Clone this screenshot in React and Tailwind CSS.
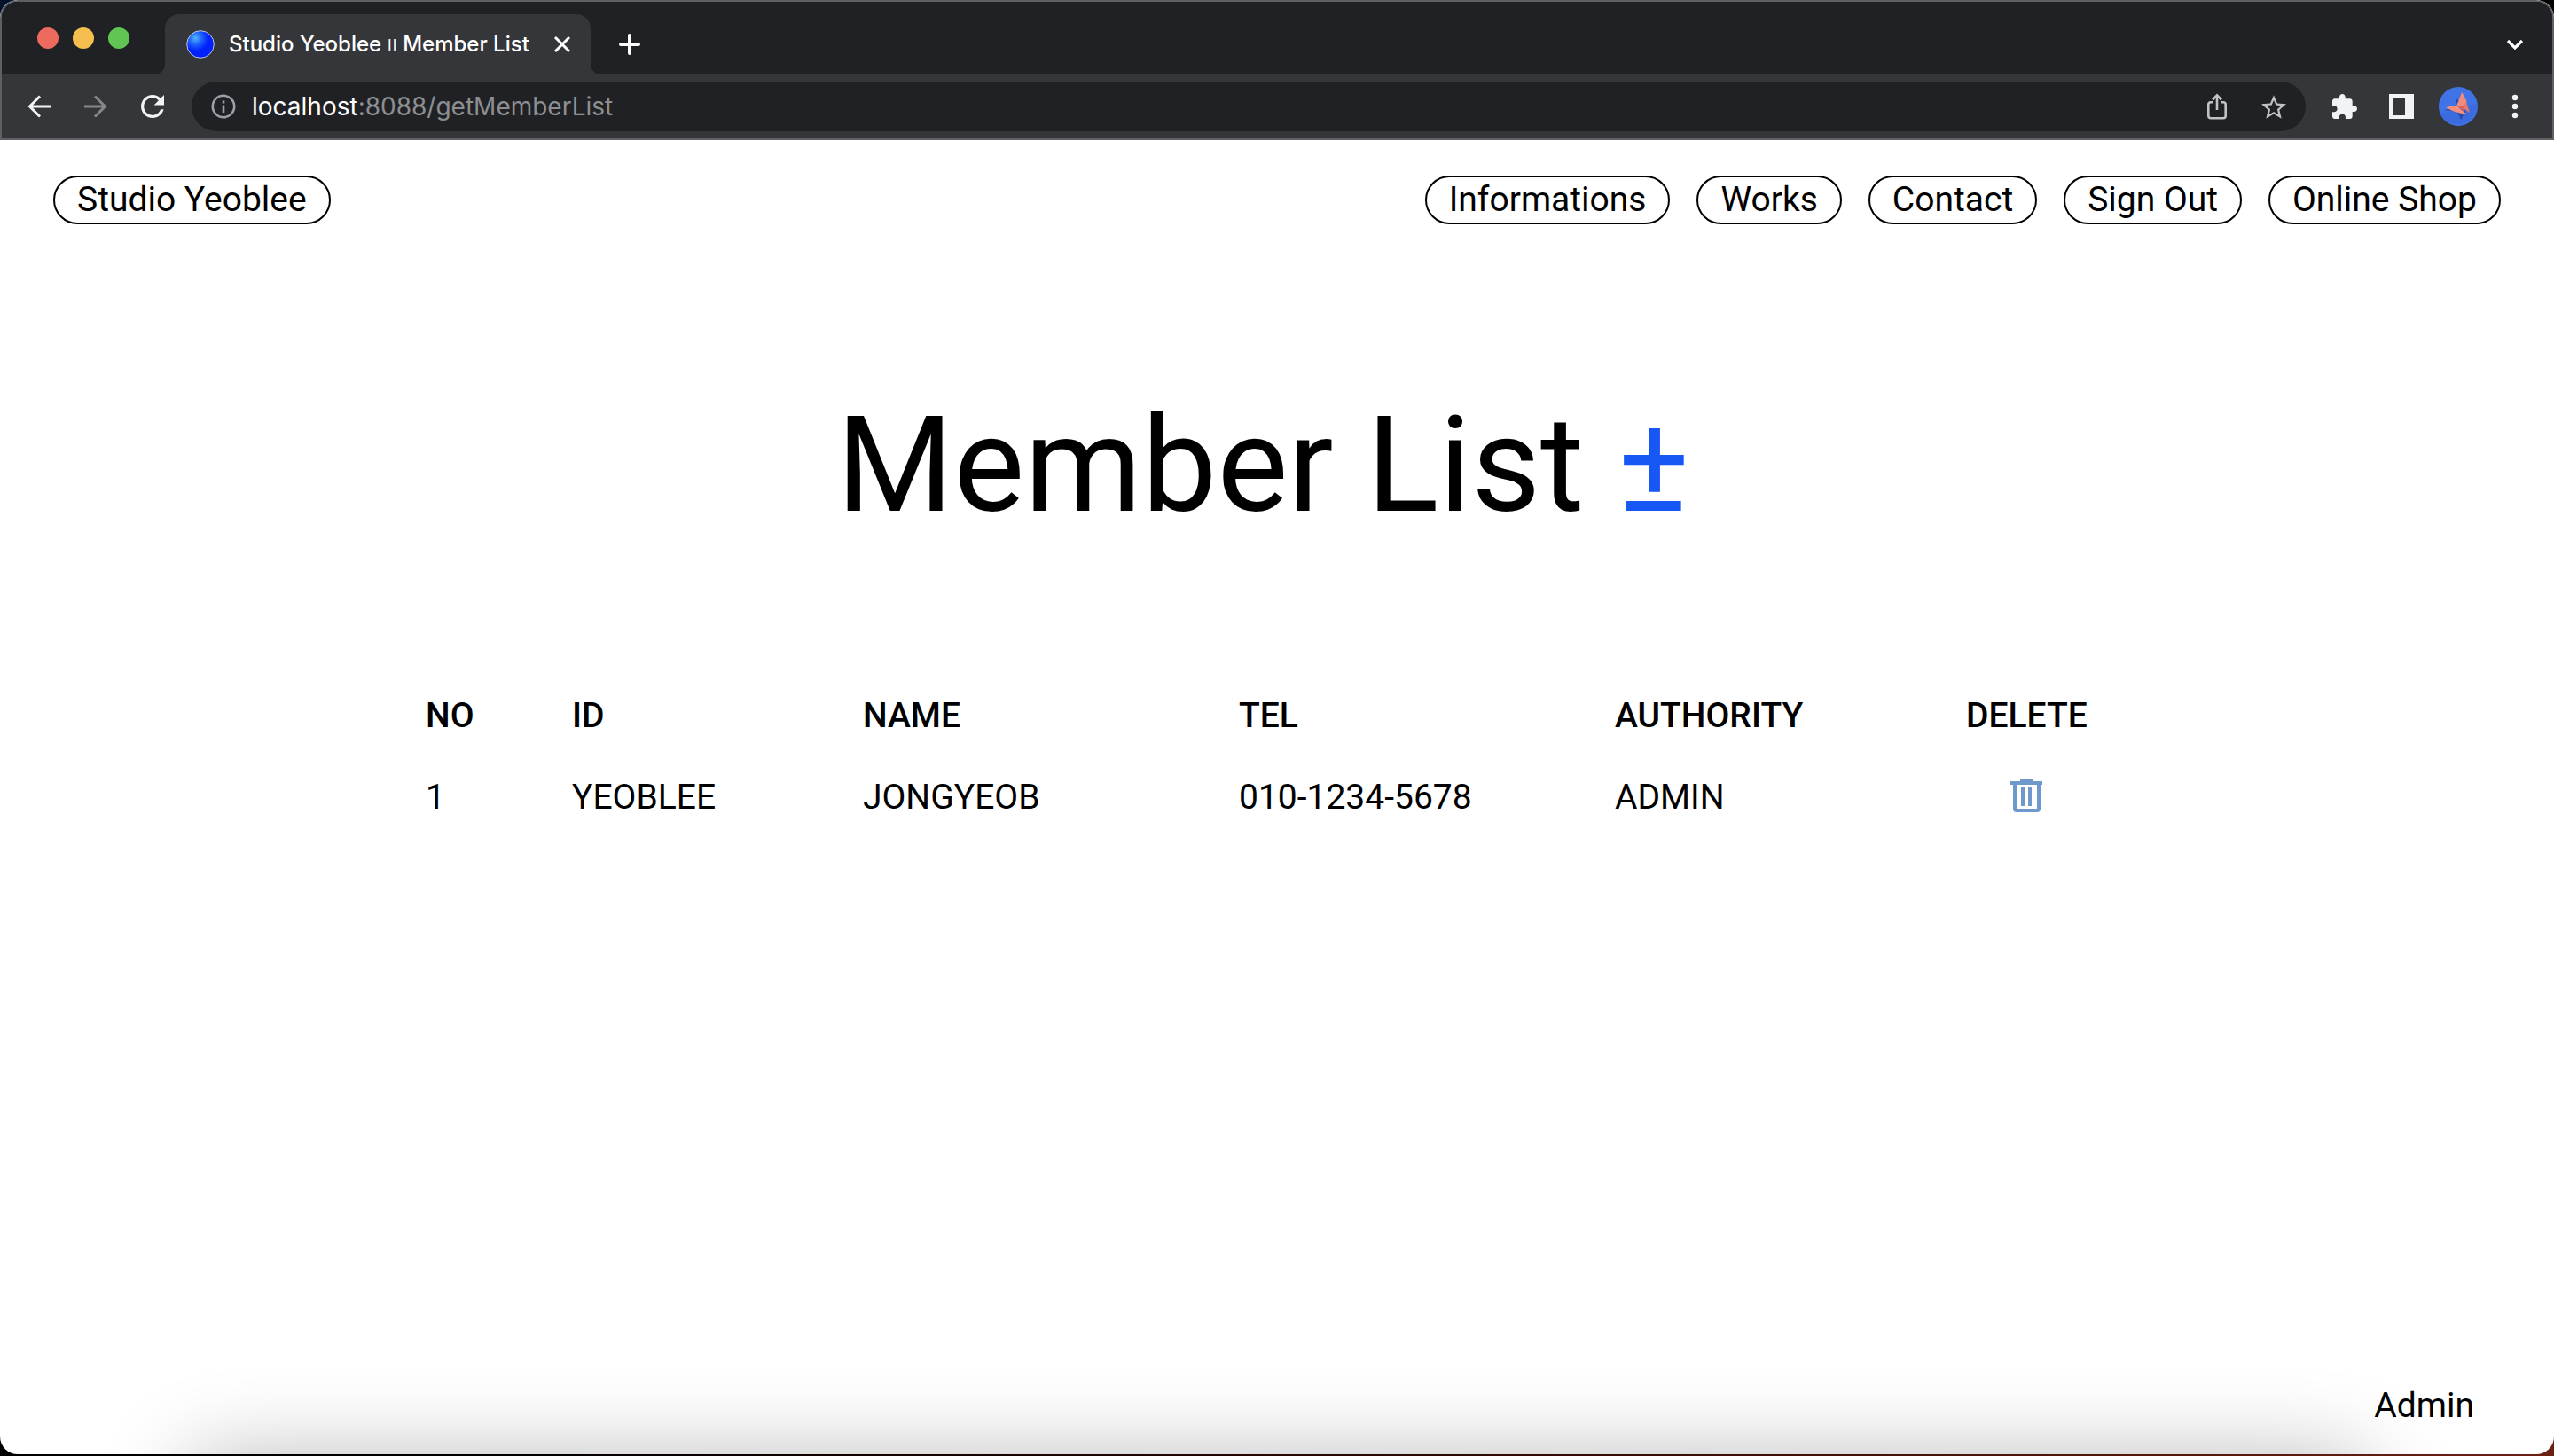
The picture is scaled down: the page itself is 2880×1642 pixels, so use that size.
const navItems = ["Informations", "Works", "Contact", "Sign Out", "Online Shop"];
const columns = [
  { label: "NO", width: "w-[165px]" },
  { label: "ID", width: "w-[328px]" },
  { label: "NAME", width: "w-[424px]" },
  { label: "TEL", width: "w-[424px]" },
  { label: "AUTHORITY", width: "w-[396px]" },
];
const members = [["1", "YEOBLEE", "JONGYEOB", "010-1234-5678", "ADMIN"]];
const pill =
  "flex h-[55px] items-center rounded-full border-2 border-black px-[25px] text-[39px] leading-none whitespace-nowrap";

function TrashIcon() {
  return (
    <svg viewBox="0 0 36 38" className="h-[38px] w-[36px]" fill="none" stroke="#7099cb">
      <path d="M0 5h36" strokeWidth="4" />
      <path d="M11 2h14" strokeWidth="3" />
      <path d="M5 5v29q0 2 2 2h23q2 0 2-2V5" strokeWidth="4" />
      <path d="M14 10v21M22 10v21" strokeWidth="4" />
    </svg>
  );
}

function Favicon() {
  return (
    <svg viewBox="0 0 32 32" className="size-8">
      <defs>
        <radialGradient id="globe" cx="0.32" cy="0.27" r="0.48">
          <stop offset="0" stopColor="#4fb4ff" />
          <stop offset="0.5" stopColor="#1d62fb" />
          <stop offset="1" stopColor="#0021fa" />
        </radialGradient>
      </defs>
      <circle cx="16" cy="16" r="15.3" fill="url(#globe)" stroke="#bfc3dc" />
    </svg>
  );
}

function ShareIcon() {
  return (
    <svg viewBox="0 0 22 30" className="h-[30px] w-[22px]" fill="none" stroke="#c1c2c4" strokeWidth="2.6">
      <path d="M7 10.3H4Q1.3 10.3 1.3 13v12.5q0 2.7 2.7 2.7h14q2.7 0 2.7-2.7V13q0-2.7-2.7-2.7h-3" />
      <path d="M11 19V3M6 7.5L11 2.3l5 5.2" />
    </svg>
  );
}

function Avatar() {
  return (
    <svg viewBox="0 0 44 44" className="size-11">
      <circle cx="22" cy="22" r="22" fill="#3f73e6" />
      <path d="M1 29Q22 28 43 18a22 22 0 0 1-42 11" fill="#3a6cdf" />
      <path d="M19.500 13.500l1.500 8-15 5 14 .5 5.500 10.500 2.500-7 3 1-4-14z" fill="#2b4aa8" />
      <path d="M26 6q5 7 5.700 12.500L22 25l-2-3z" fill="#f28b7d" />
      <path d="M8 23q8-2.500 13-1l11 9q-15-2-24-8" fill="#f58f80" />
      <path d="M31 17l4 12-8-5.500z" fill="#e8776b" />
      <path d="M21 22l6-1 2 3-1 3z" fill="#d9655c" />
    </svg>
  );
}

function TabStrip() {
  return (
    <div className="flex h-[82px] items-end bg-[#202124]">
      <div className="flex h-full w-[172px] items-center gap-4 pl-10">
        <button aria-label="Close window" className="size-6 rounded-full bg-[#ed6a5f]" />
        <button aria-label="Minimize window" className="size-6 rounded-full bg-[#f5bf4f]" />
        <button aria-label="Zoom window" className="size-6 rounded-full bg-[#61c554]" />
      </div>
      <svg viewBox="0 0 12 12" className="size-3" fill="#35363a"><path d="M12 0v12H0A12 12 0 0 0 12 0" /></svg>
      <div className="flex h-[68px] w-[480px] items-center rounded-t-2xl bg-[#35363a] pl-6 pr-5 text-white">
        <Favicon />
        <span className="ml-4 whitespace-nowrap font-[Inter,sans-serif] text-[24px] font-medium">
          Studio Yeoblee <span className="font-light">ıı</span> Member List
        </span>
        <button aria-label="Close tab" className="ml-auto">
          <svg viewBox="0 0 24 24" className="size-6" stroke="#fff" strokeWidth="3"><path d="M4 4l16 16M20 4L4 20" /></svg>
        </button>
      </div>
      <svg viewBox="0 0 12 12" className="size-3" fill="#35363a"><path d="M0 0v12h12A12 12 0 0 1 0 0" /></svg>
      <button aria-label="New tab" className="mb-[22px] ml-5">
        <svg viewBox="0 0 24 24" className="size-6" stroke="#fff" strokeWidth="4" strokeLinecap="round"><path d="M12 2v20M2 12h20" /></svg>
      </button>
      <button aria-label="Search tabs" className="mb-[22px] ml-auto mr-[30px]">
        <svg viewBox="0 0 24 24" className="size-6" fill="none" stroke="#fff" strokeWidth="3.2"><path d="M4 8l8 8 8-8" /></svg>
      </button>
    </div>
  );
}

function Toolbar() {
  return (
    <div className="flex h-[74px] items-center border-b-2 border-[#5f6064] bg-[#35363a] pl-[29px] pr-[38px]">
      <div className="flex gap-[38px]">
        <button aria-label="Back">
          <svg viewBox="0 0 26 26" className="size-[26px]" fill="none" stroke="#f1f3f4" strokeWidth="3"><path d="M26 13H2M14 1.500L2.500 13 14 24.500" /></svg>
        </button>
        <button aria-label="Forward">
          <svg viewBox="0 0 26 26" className="size-[26px]" fill="none" stroke="#86878a" strokeWidth="3"><path d="M0 13h24M12 1.500L23.500 13 12 24.500" /></svg>
        </button>
        <button aria-label="Reload">
          <svg viewBox="4 4 16 16" className="size-[26px]" fill="#f1f3f4">
            <path d="M17.650 6.350C16.200 4.900 14.210 4 12 4c-4.420 0-7.990 3.580-7.990 8s3.570 8 7.990 8c3.730 0 6.840-2.550 7.730-6h-2.080c-.82 2.330-3.040 4-5.650 4-3.310 0-6-2.690-6-6s2.690-6 6-6c1.660 0 3.140.69 4.220 1.780L13 11h7V4z" />
          </svg>
        </button>
      </div>
      <div className="ml-[31px] flex h-14 flex-1 items-center rounded-full bg-[#202124] pl-[22px] pr-[22px]">
        <button aria-label="Site information">
          <svg viewBox="0 0 28 28" className="size-7" fill="none" stroke="#9aa0a6" strokeWidth="2.600">
            <circle cx="14" cy="14" r="12.200" />
            <path d="M14 12.500v8.500M14 7.500v3" />
          </svg>
        </button>
        <div role="textbox" aria-label="Address" className="ml-[18px] flex-1 font-[Inter,sans-serif] text-[28px] leading-none text-[#8d8e91]">
          <span className="text-white">localhost</span>:8088/getMemberList
        </div>
        <button aria-label="Share"><ShareIcon /></button>
        <button aria-label="Bookmark" className="ml-[39px]">
          <svg viewBox="2 2 20 19" className="h-[27px] w-7" fill="#c1c2c4">
            <path d="M22 9.240l-7.190-.62L12 2 9.190 8.630 2 9.240l5.460 4.730L5.820 21 12 17.270 18.180 21l-1.630-7.030zM12 15.400l-3.760 2.270 1-4.280-3.320-2.880 4.380-.38L12 6.100l1.710 4.040 4.380.38-3.320 2.880 1 4.280z" />
          </svg>
        </button>
      </div>
      <div className="ml-[30px] flex items-center">
        <button aria-label="Extensions">
          <svg viewBox="2 1 21 21" className="size-7" fill="#f1f3f4">
            <path d="M20.500 11H19V7c0-1.100-.9-2-2-2h-4V3.500C13 2.120 11.880 1 10.500 1S8 2.120 8 3.500V5H4c-1.100 0-1.990.9-1.990 2v3.800H3.500c1.490 0 2.700 1.210 2.700 2.700s-1.210 2.700-2.700 2.700H2V20c0 1.100.9 2 2 2h3.800v-1.500c0-1.490 1.210-2.700 2.700-2.700 1.490 0 2.700 1.210 2.700 2.700V22H17c1.100 0 2-.9 2-2v-4h1.500c1.380 0 2.500-1.120 2.500-2.500S21.880 11 20.500 11z" />
          </svg>
        </button>
        <button aria-label="Side panel" className="ml-9">
          <svg viewBox="0 0 28 28" className="size-7"><path fill="#f1f3f4" fillRule="evenodd" d="M0 0h28v28H0zM4 4v20h14V4z" /></svg>
        </button>
        <button aria-label="Profile" className="ml-7"><Avatar /></button>
        <button aria-label="Menu" className="ml-[38px]">
          <svg viewBox="0 0 8 28" className="h-7 w-2" fill="#f1f3f4">
            <circle cx="4" cy="4" r="3.200" /><circle cx="4" cy="14" r="3.200" /><circle cx="4" cy="24" r="3.200" />
          </svg>
        </button>
      </div>
    </div>
  );
}

export default function App() {
  return (
    <div className="flex min-h-screen flex-col bg-linear-to-br from-[#04142c] via-black via-50% to-[#6b2012] pb-0.5 font-[Roboto,sans-serif] text-black">
      <div className="relative flex flex-1 flex-col overflow-hidden rounded-[20px] bg-white">
        <header className="overflow-hidden rounded-t-[20px] border-x-2 border-t-2 border-[#5f6064] bg-[#202124]">
          <TabStrip />
          <Toolbar />
        </header>
        <main className="flex flex-1 flex-col">
          <div className="flex justify-between px-[60px] pt-10">
            <a href="#home" className={pill}>Studio Yeoblee</a>
            <nav className="flex gap-[30px]">
              {navItems.map((n) => (
                <a key={n} href="#page" className={pill}>{n}</a>
              ))}
            </nav>
          </div>
          <h1 className="mt-[176px] pr-8 text-center text-[151px] leading-[192px]">
            Member List <span className="text-[#1757f5]">±</span>
          </h1>
          <table className="mt-[160px] ml-[480px] table-fixed self-start text-left text-[39px] leading-[52px]">
            <thead>
              <tr>
                {columns.map((c) => (
                  <th key={c.label} className={`${c.width} font-medium`}>{c.label}</th>
                ))}
                <th className="font-medium">DELETE</th>
              </tr>
            </thead>
            <tbody>
              {members.map((m) => (
                <tr key={m[0]} className="h-[132px]">
                  {m.map((v) => (
                    <td key={v}>{v}</td>
                  ))}
                  <td>
                    <button aria-label={`Delete ${m[1]}`} className="mx-auto block pb-1"><TrashIcon /></button>
                  </td>
                </tr>
              ))}
            </tbody>
          </table>
        </main>
        <div className="pointer-events-none absolute inset-x-[215px] top-full mt-2 h-[200px] shadow-[0_0_100px_rgba(0,0,0,0.3)]" />
        <footer className="relative pr-[90px] pb-[30px] text-right text-[39px] leading-[50px]">Admin</footer>
      </div>
    </div>
  );
}
